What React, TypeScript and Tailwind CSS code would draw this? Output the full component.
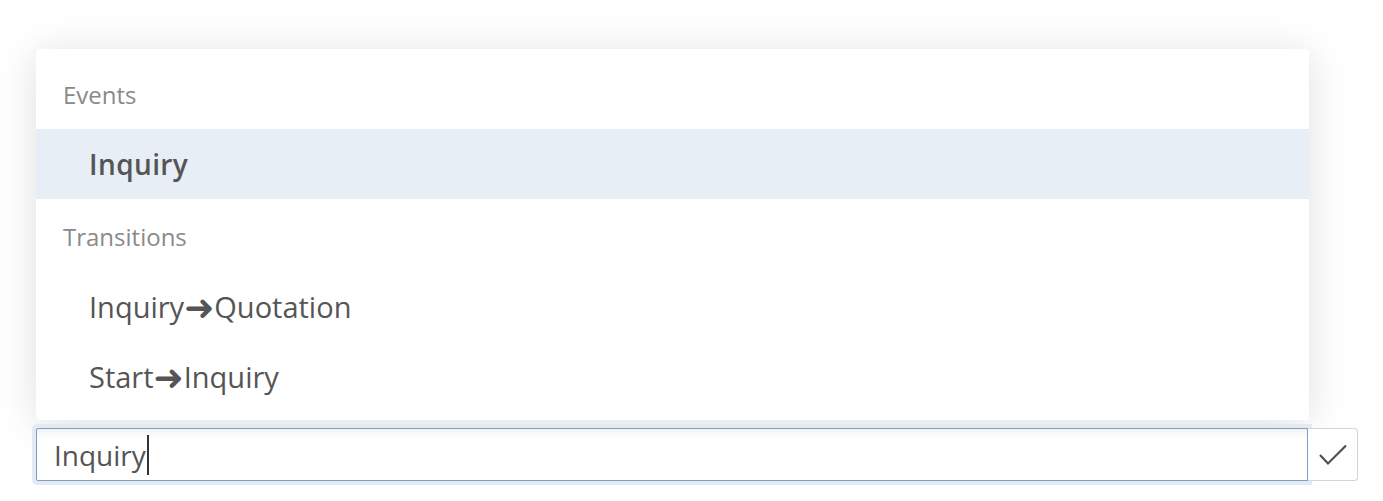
import React from "react";

const font = { fontFamily: '"Open Sans", "Noto Sans", sans-serif' };

function Arrow() {
  return (
    <span className="inline-block text-[36px] leading-none mx-[0px] relative top-[1px]" style={{ fontFamily: '"DejaVu Sans", sans-serif' }}>
      ➜
    </span>
  );
}

export default function App() {
  return (
    <div className="w-[1383px] h-[501px] bg-white relative overflow-hidden" style={font}>
      <div className="pt-[49px] pl-[36px] w-[1310px]">
        <div className="w-[1273px] h-[371px] bg-white rounded-[4px] shadow-[0_4px_40px_rgba(0,0,0,0.13)] py-[8px] flex flex-col">
          <div className="h-[72px] flex items-center pl-[27px] pt-[4px] text-[24px] text-[#8a8a8a]">Events</div>
          <div className="h-[70px] flex items-center pl-[53px] text-[28px] tracking-[0.4px] font-semibold text-[#555555] bg-[#e7eef5]">Inquiry</div>
          <div className="h-[73px] flex items-center pl-[27px] pt-[3px] text-[24px] text-[#8a8a8a]">Transitions</div>
          <div className="h-[70px] flex items-center pl-[53px] text-[29px] text-[#555555]">
            <span>Inquiry</span>
            <Arrow />
            <span>Quotation</span>
          </div>
          <div className="h-[70px] flex items-center pl-[53px] text-[29px] text-[#555555]">
            <span>Start</span>
            <Arrow />
            <span>Inquiry</span>
          </div>
        </div>
      </div>
      <div className="pl-[36px] pt-[8px] flex">
        <div className="w-[1272px] h-[53px] border border-[#7ba0c4] shadow-[0_0_0_4px_#e3eaf2,inset_0_6px_8px_-4px_rgba(0,0,0,0.08)] bg-white flex items-center pl-[17px] text-[28px] text-[#555555] rounded-l-[2px]">
          <span>Inquiry</span>
          <span className="w-[2px] h-[40px] bg-[#333] ml-[1px]"></span>
        </div>
        <div className="w-[50px] h-[53px] border border-l-0 border-[#d4d4d4] rounded-r-[4px] flex items-center justify-center bg-white">
          <svg width="30" height="24" viewBox="0 0 30 24" fill="none" stroke="#505050" strokeWidth="2.2">
            <path d="M2 12 L10 20.5 L28 2.5" />
          </svg>
        </div>
      </div>
    </div>
  );
}
